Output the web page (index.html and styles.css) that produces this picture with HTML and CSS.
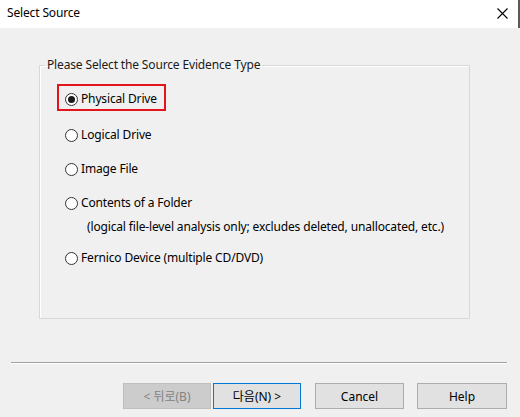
FILE: index.html
```html
<!DOCTYPE html>
<html lang="ko">
<head>
    <meta charset="UTF-8">
    <meta name="viewport" content="width=device-width, initial-scale=1.0">
    <title>Select Source</title>
    <link rel="stylesheet" href="styles.css">
</head>
<body>
    <!-- Title bar -->
    <div class="titlebar">
        <span class="title">Select Source</span>
        <svg class="close" width="11" height="11" viewBox="0 0 11 11">
            <path d="M0.5 0.5 L10.5 10.5 M10.5 0.5 L0.5 10.5" stroke="#000" stroke-width="1.1" fill="none"/>
        </svg>
    </div>

    <!-- Evidence type group -->
    <fieldset class="group">
        <legend>Please Select the Source Evidence Type</legend>
        <div class="options">
            <label class="option highlight">
                <input type="radio" name="src" checked>
                <span>Physical Drive</span>
            </label>
            <label class="option">
                <input type="radio" name="src">
                <span>Logical Drive</span>
            </label>
            <label class="option">
                <input type="radio" name="src">
                <span>Image File</span>
            </label>
            <label class="option">
                <input type="radio" name="src">
                <span>Contents of a Folder</span>
            </label>
            <p class="note">(logical file-level analysis only; excludes deleted, unallocated, etc.)</p>
            <label class="option last">
                <input type="radio" name="src">
                <span>Fernico Device (multiple CD/DVD)</span>
            </label>
        </div>
    </fieldset>

    <div class="separator"></div>

    <!-- Buttons -->
    <div class="buttons">
        <button class="btn disabled" disabled>&lt; 뒤로(B)</button>
        <button class="btn default">다음(N) &gt;</button>
        <button class="btn cancel">Cancel</button>
        <button class="btn help">Help</button>
    </div>
</body>
</html>
```

FILE: styles.css
```css
* {
    margin: 0;
    padding: 0;
    box-sizing: border-box;
}

body {
    background-color: #f0f0f0;
    font-family: "Noto Sans", "Noto Sans CJK KR", sans-serif;
    font-size: 12px;
    line-height: 16px;
    letter-spacing: -0.15px;
    color: #000;
    width: 520px;
    height: 417px;
    overflow: hidden;
}

/* Title bar */
.titlebar {
    height: 28px;
    background-color: #fff;
    display: flex;
    align-items: center;
    justify-content: space-between;
    padding: 0 10px 0 7px;
    border-right: 2px solid #5a5a5a;
}
.title {
    font-size: 12px;
    margin-top: -3px;
}
.close {
    margin-top: -2px;
}

/* Group box */
.group {
    margin: 29px 0 0 39px;
    width: 431px;
    border: 1px solid #d8d8d8;
    box-shadow: inset 1px 1px 0 #fff;
    padding: 0 0 0 5px;
}
.group legend {
    padding: 0 2px;
    color: #1a1a1a;
}
.options {
    height: 245px;
    padding: 18px 0 0 20px;
    display: flex;
    flex-direction: column;
    align-items: flex-start;
}
.option {
    display: flex;
    align-items: center;
    height: 16px;
    margin-bottom: 18px;
    position: relative;
}
.option.highlight {
    margin-bottom: 20px;
}
.option input {
    appearance: none;
    width: 13px;
    height: 13px;
    border: 1px solid #333;
    border-radius: 50%;
    background-color: #fff;
    margin-right: 3px;
    display: grid;
    place-content: center;
}
.option input:checked::before {
    content: "";
    width: 7px;
    height: 7px;
    border-radius: 50%;
    background-color: #1a1a1a;
}
.option.highlight::after {
    content: "";
    position: absolute;
    left: -8px;
    top: -7px;
    right: -9px;
    bottom: -4px;
    border: 2px solid #e3141c;
}
.note {
    margin: -10px 0 15px 22px;
}

/* Separator */
.separator {
    margin: 43px 13px 0 11px;
    height: 2px;
    border-top: 1px solid #a0a0a0;
    border-bottom: 1px solid #fff;
}

/* Buttons */
.buttons {
    display: flex;
    justify-content: flex-end;
    margin-top: 19px;
    padding-right: 13px;
}
.btn {
    height: 26px;
    width: 88px;
    font-family: "Noto Sans", "Noto Sans CJK KR", sans-serif;
    font-size: 12px;
    color: #000;
    background-color: #e1e1e1;
    border: 1px solid #adadad;
}
.btn.disabled {
    background-color: #cccccc;
    border-color: #bfbfbf;
    color: #838383;
}
.btn.default {
    margin-left: 2px;
    border-color: #0078d7;
}
.btn.cancel {
    margin-left: 14px;
    width: 89px;
}
.btn.help {
    margin-left: 13px;
    width: 90px;
}
```
